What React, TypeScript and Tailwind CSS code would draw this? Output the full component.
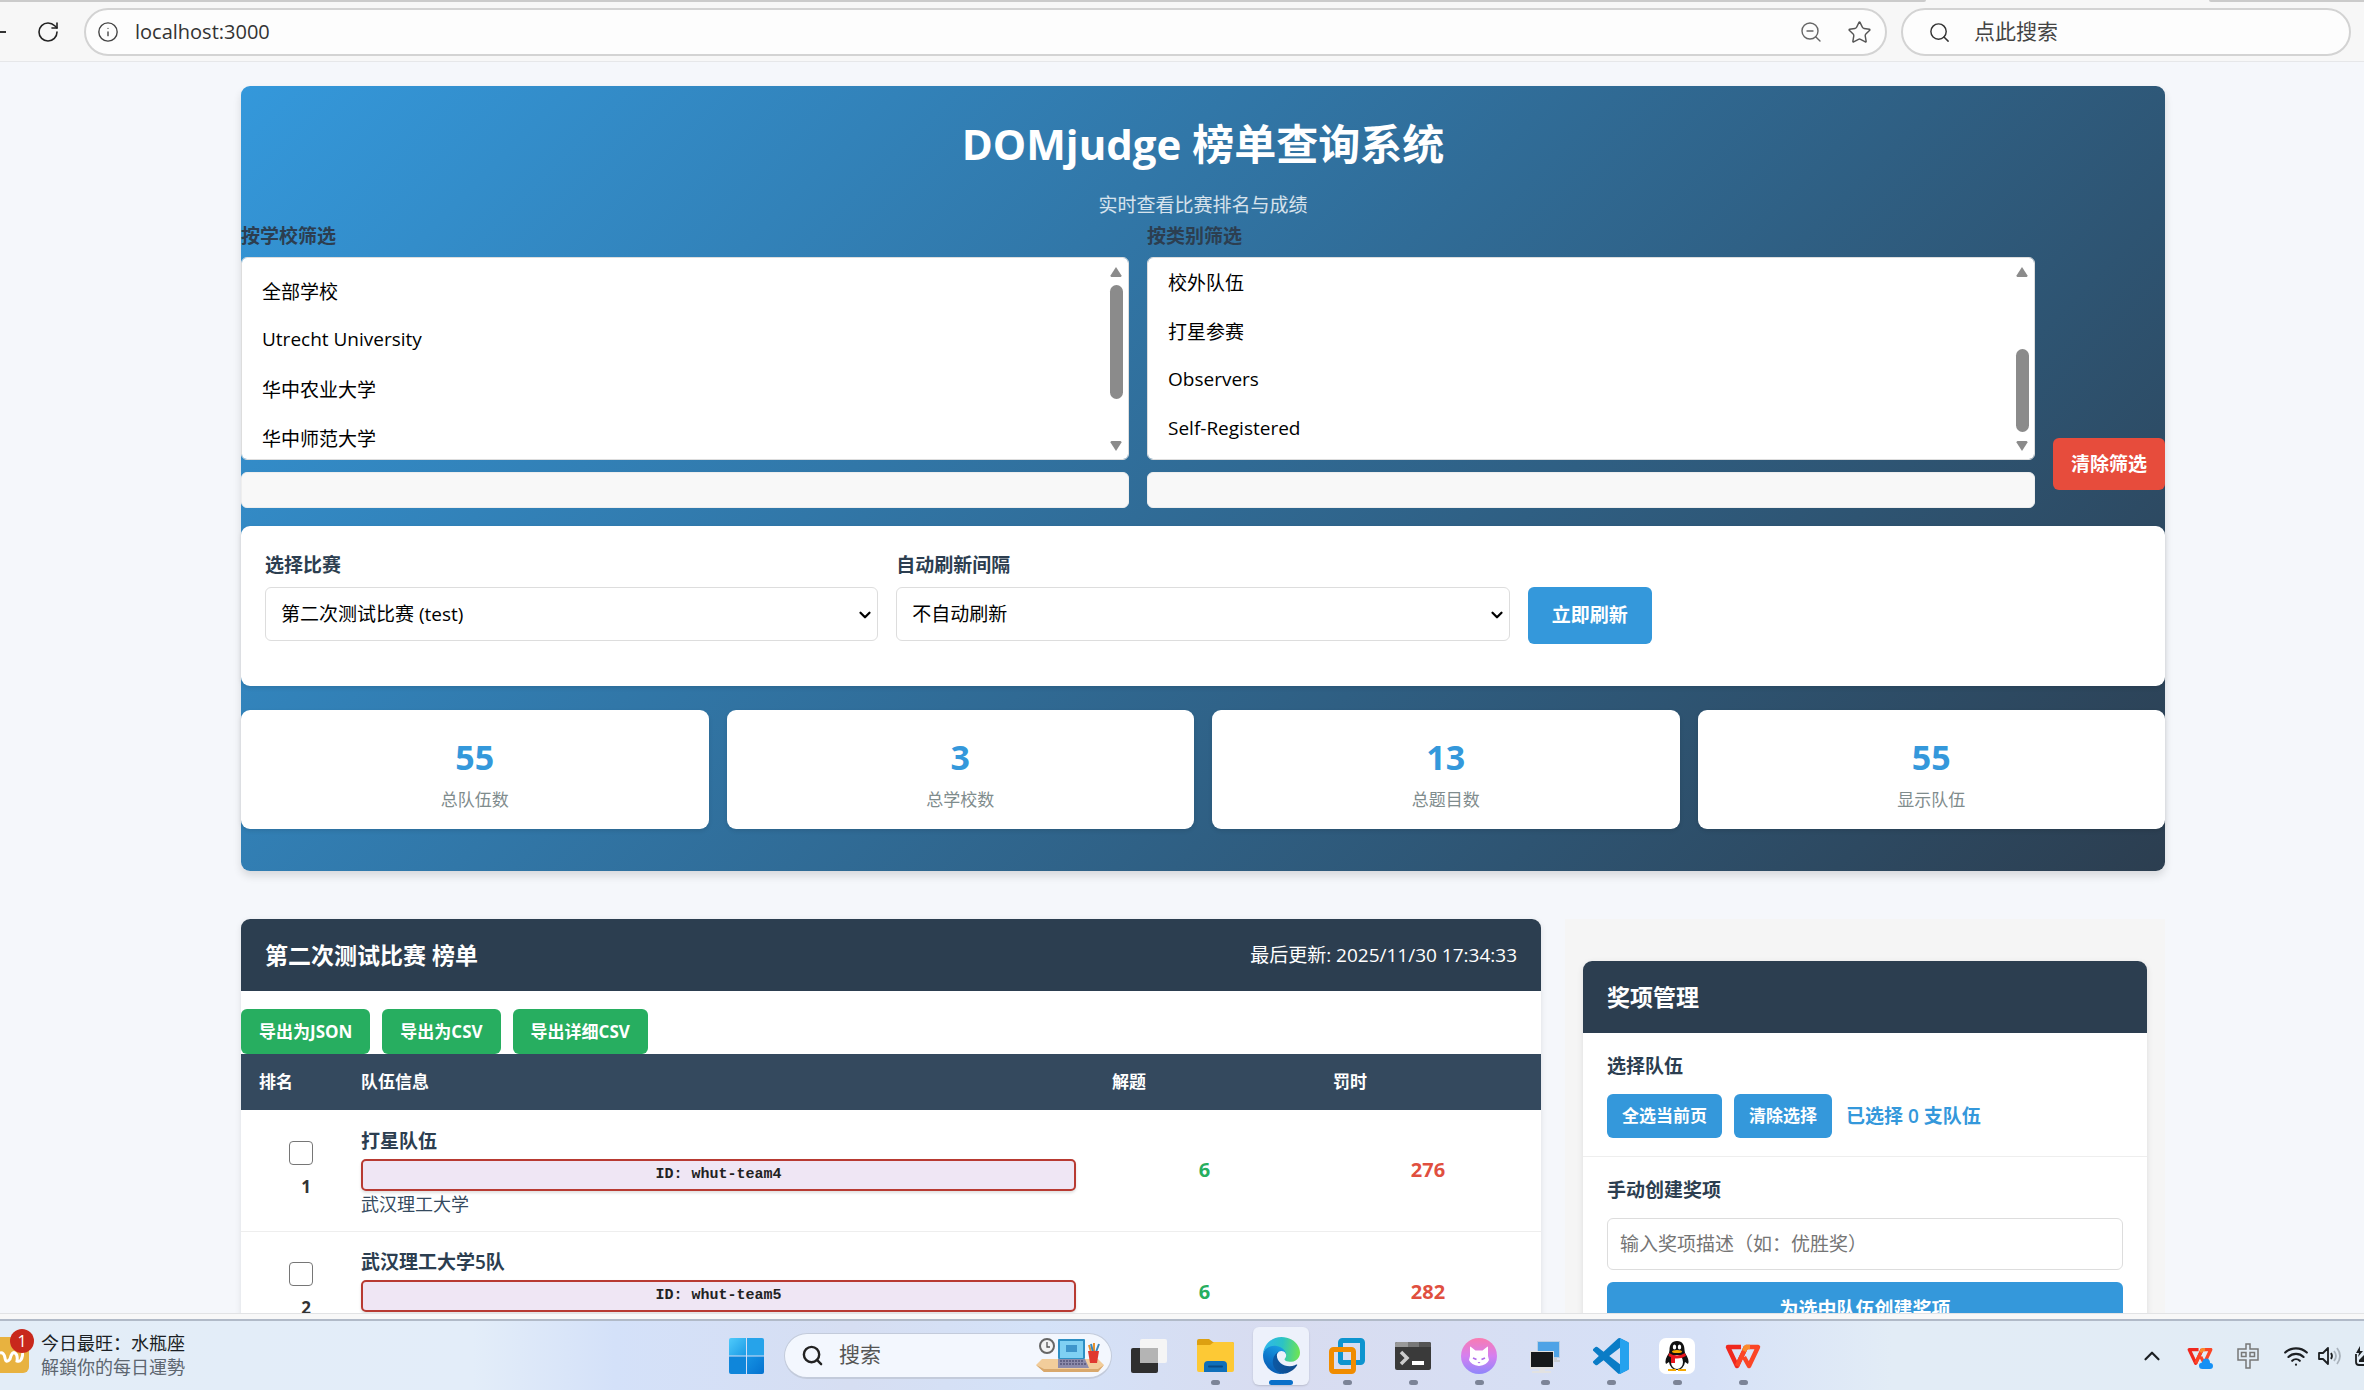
import { useEffect, useRef, useState } from "react";
import type { ReactNode } from "react";
import { ChevronDown, ChevronUp, Info, RotateCw, Search, Star, Wifi, ZoomOut } from "lucide-react";

const schools = ["全部学校", "Utrecht University", "华中农业大学", "华中师范大学", "武汉理工大学"];
const categories = ["全部类别", "Participants", "正式队伍", "校外队伍", "打星参赛", "Observers", "Self-Registered"];

const stats = [
  { label: "总队伍数", value: 55 },
  { label: "总学校数", value: 3 },
  { label: "总题目数", value: 13 },
  { label: "显示队伍", value: 55 },
];

const teams = [
  { rank: 1, name: "打星队伍", id: "whut-team4", school: "武汉理工大学", solved: 6, time: 276 },
  { rank: 2, name: "武汉理工大学5队", id: "whut-team5", school: "武汉理工大学", solved: 6, time: 282 },
];

const BrowserBar = () => {
  return (
    <header className="shrink-0 bg-[#f7f7f7] border-b border-[#e6e7e9]">
      <div className="flex h-[2px]">
        <div className="flex-[1926] bg-[#cbcbcb] rounded-br-sm"></div>
        <div className="flex-[283]"></div>
        <div className="flex-[155] bg-[#cbcbcb] rounded-bl-sm"></div>
      </div>
      <div className="flex items-center pt-[6px] pb-[5px] pr-[13px]">
        <button aria-label="后退" className="w-[6px] h-6 flex items-center">
          <span className="w-full h-[2px] bg-[#333]"></span>
        </button>
        <button aria-label="刷新页面" className="ml-[30px] mr-6 text-[#222]">
          <RotateCw size={24} strokeWidth={1.6} />
        </button>
        <div className="flex-1 h-12 flex items-center rounded-full border-2 border-[#d3d3d3] bg-[#fdfdfd] pl-[11px] pr-[13px]">
          <Info size={22} strokeWidth={1.5} className="text-[#444]" />
          <input
            aria-label="地址"
            defaultValue="localhost:3000"
            className="flex-1 ml-4 text-xl text-[#333] bg-transparent outline-none"
          />
          <button aria-label="缩放" className="text-[#666]">
            <ZoomOut size={24} strokeWidth={1.4} />
          </button>
          <button aria-label="收藏" className="ml-6 text-[#555]">
            <Star size={25} strokeWidth={1.4} />
          </button>
        </div>
        <label className="w-[450px] h-12 ml-[14px] flex items-center rounded-full border-2 border-[#d3d3d3] bg-[#fdfdfd] pl-[25px]">
          <Search size={23} strokeWidth={1.5} className="text-[#333]" />
          <input
            aria-label="搜索网页"
            placeholder="点此搜索"
            className="flex-1 ml-[23px] text-[21px] bg-transparent outline-none placeholder:text-[#444]"
          />
        </label>
      </div>
    </header>
  );
};

type FilterListProps = {
  id: string;
  label: string;
  options: string[];
  scrollTop: number;
  thumb: string;
};

const FilterList = ({ id, label, options, scrollTop, thumb }: FilterListProps) => {
  const ref = useRef<HTMLSelectElement>(null);

  useEffect(() => {
    if (ref.current) ref.current.scrollTop = scrollTop;
  }, [scrollTop]);

  return (
    <div className="flex-1 min-w-0">
      <label htmlFor={id} className="block mb-[6px] text-[19px] leading-[30px] font-semibold text-[#2c3e50]">
        {label}
      </label>
      <div className="relative">
        <select
          id={id}
          ref={ref}
          multiple
          className="block w-full h-[203px] py-[9px] px-[18px] rounded-md border border-[#ddd] bg-white text-[19px] text-black overflow-y-auto [scrollbar-width:none]"
        >
          {options.map((option) => (
            <option key={option} className="h-[49px] px-[2px] pt-[10px] pb-0">
              {option}
            </option>
          ))}
        </select>
        <div className="absolute right-[6px] top-[10px] bottom-[9px] w-[14px] flex flex-col items-center text-[#8b8b8b]">
          <svg width="12" height="10" viewBox="0 0 12 10" fill="currentColor">
            <path d="M6 0 11.5 8.5Q11.5 10 10.5 10H1.5Q.5 10 .5 8.5Z" />
          </svg>
          <div className={`w-[13px] rounded-full bg-[#8b8b8b] ${thumb}`}></div>
          <svg width="12" height="10" viewBox="0 0 12 10" fill="currentColor" className="mt-auto">
            <path d="M6 10 11.5 1.5Q11.5 0 10.5 0H1.5Q.5 0 .5 1.5Z" />
          </svg>
        </div>
      </div>
      <div className="mt-3 h-9 rounded-md bg-[#f8f8f8] border border-[#eee]"></div>
    </div>
  );
};

const SelectField = ({ id, label, value }: { id: string; label: string; value: string }) => {
  return (
    <div>
      <label htmlFor={id} className="block mb-[6px] text-[19px] leading-[31px] font-semibold text-[#2c3e50]">
        {label}
      </label>
      <div className="relative">
        <select
          id={id}
          className="appearance-none block w-full h-[54px] pl-[15px] pr-10 rounded-md border border-[#ddd] bg-white text-[19px] text-black"
        >
          <option>{value}</option>
        </select>
        <ChevronDown size={18} strokeWidth={3} className="absolute right-1 top-[19px] text-black pointer-events-none" />
      </div>
    </div>
  );
};

const Header = () => {
  return (
    <section className="rounded-[9px] bg-[linear-gradient(135deg,#3498db,#2c3e50)] pt-6 pb-[42px] shadow-[0_5px_8px_rgba(0,0,0,0.12)]">
      <h1 className="mb-3 text-center text-[42px] leading-[68px] font-bold text-white">DOMjudge 榜单查询系统</h1>
      <p className="text-center text-[19px] leading-[31px] text-white/80">实时查看比赛排名与成绩</p>
      <div className="flex items-end gap-[18px]">
        <FilterList id="school" label="按学校筛选" options={schools} scrollTop={0} thumb="mt-[8px] h-[114px]" />
        <FilterList id="category" label="按类别筛选" options={categories} scrollTop={156} thumb="mt-[72px] h-[83px]" />
        <button className="h-[52px] px-[18px] mb-[18px] rounded-md bg-[#e74c3c] text-[19px] font-bold text-white">
          清除筛选
        </button>
      </div>

      <div className="mt-[18px] grid grid-cols-3 gap-[18px] items-start rounded-[9px] bg-white px-6 pt-6 pb-[42px] shadow-[0_2px_4px_rgba(0,0,0,0.1)]">
        <SelectField id="contest" label="选择比赛" value="第二次测试比赛 (test)" />
        <SelectField id="interval" label="自动刷新间隔" value="不自动刷新" />
        <button className="mt-[37px] h-[57px] px-6 justify-self-start rounded-md bg-[#3498db] text-[19px] font-bold text-white">
          立即刷新
        </button>
      </div>

      <div className="mt-6 grid grid-cols-4 gap-[18px]">
        {stats.map((stat) => (
          <div
            key={stat.label}
            className="rounded-[9px] bg-white pt-[18px] pb-4 text-center shadow-[0_2px_4px_rgba(0,0,0,0.1)]"
          >
            <div className="text-[34px] leading-[58px] font-bold text-[#3498db]">{stat.value}</div>
            <div className="text-[17px] leading-[27px] text-[#7f8c8d]">{stat.label}</div>
          </div>
        ))}
      </div>
    </section>
  );
};

const Scoreboard = () => {
  return (
    <section className="rounded-t-[9px] overflow-hidden bg-white shadow-[0_2px_6px_rgba(0,0,0,0.1)]">
      <div className="h-[72px] px-6 flex items-center justify-between bg-[#2c3e50] text-white">
        <h2 className="text-[23px] font-bold">第二次测试比赛 榜单</h2>
        <span className="text-[19px]">最后更新: 2025/11/30 17:34:33</span>
      </div>
      <div className="mt-[18px] flex gap-3">
        {["导出为JSON", "导出为CSV", "导出详细CSV"].map((text) => (
          <button key={text} className="h-[45px] px-[18px] rounded-md bg-[#27ae60] text-[17px] font-bold text-white">
            {text}
          </button>
        ))}
      </div>
      <table className="w-full table-fixed border-collapse">
        <colgroup>
          <col className="w-[102px]" />
          <col />
          <col className="w-[17%]" />
          <col className="w-[226px]" />
        </colgroup>
        <thead>
          <tr className="h-14 bg-[#34495e] text-left text-[17px] text-white">
            <th className="px-[18px] font-bold">排名</th>
            <th className="px-[18px] font-bold">队伍信息</th>
            <th className="px-[18px] font-bold">解题</th>
            <th className="px-[18px] font-bold">罚时</th>
          </tr>
        </thead>
        <tbody>
          {teams.map((team) => (
            <tr key={team.id} className="h-[121px] border-b border-[#eee]">
              <td className="pl-[18px]">
                <div className="flex flex-col items-center gap-2 text-[#333]">
                  <input
                    type="checkbox"
                    aria-label={`选择 ${team.name}`}
                    className="appearance-none w-6 h-6 rounded-[4px] border border-[#767676] bg-white"
                  />
                  <span className="pl-[10px] text-[17px] leading-[27px] font-bold">{team.rank}</span>
                </div>
              </td>
              <td className="px-[18px]">
                <div className="text-[19px] leading-[31px] font-semibold text-[#2c3e50]">{team.name}</div>
                <div className="my-[2px] h-8 flex items-center justify-center rounded-[5px] border-2 border-[#b83a32] bg-[#efe6f4] font-['Liberation_Mono',monospace] text-[15px] font-bold text-[#222] shadow-[0_2px_3px_rgba(0,0,0,0.12)]">
                  ID: {team.id}
                </div>
                <div className="text-[18px] leading-[22px] text-[#34495e]">{team.school}</div>
              </td>
              <td className="text-center text-xl font-bold text-[#27ae60]">{team.solved}</td>
              <td className="text-center text-xl font-bold text-[#e04f3f]">{team.time}</td>
            </tr>
          ))}
        </tbody>
      </table>
    </section>
  );
};

const AwardPanel = () => {
  const [award, setAward] = useState("");

  return (
    <aside className="bg-[#f5f5f5] px-[18px] pt-[42px]">
      <div className="rounded-t-[9px] overflow-hidden bg-white shadow-[0_2px_6px_rgba(0,0,0,0.1)]">
        <h2 className="h-[72px] px-6 flex items-center bg-[#2c3e50] text-[23px] font-bold text-white">奖项管理</h2>
        <div className="p-[18px] px-6 border-b border-[#eee]">
          <h3 className="mb-3 text-[19px] leading-[31px] font-semibold text-[#2c3e50]">选择队伍</h3>
          <div className="flex items-center gap-3">
            <button className="h-11 px-[15px] rounded-md bg-[#3498db] text-[17px] font-bold text-white">全选当前页</button>
            <button className="h-11 px-[15px] rounded-md bg-[#3498db] text-[17px] font-bold text-white">清除选择</button>
            <span className="ml-[2px] text-[19px] font-semibold text-[#3498db]">已选择 0 支队伍</span>
          </div>
        </div>
        <div className="px-6 pt-[18px] pb-6">
          <label htmlFor="award" className="block mb-3 text-[19px] leading-[31px] font-semibold text-[#2c3e50]">
            手动创建奖项
          </label>
          <input
            id="award"
            value={award}
            onChange={(e) => setAward(e.target.value)}
            placeholder="输入奖项描述（如：优胜奖）"
            className="block w-full h-[52px] px-3 rounded-md border border-[#ddd] text-[19px] placeholder:text-[#757575]"
          />
          <button className="mt-3 w-full h-[54px] rounded-md bg-[#3498db] text-[19px] font-bold text-white">
            为选中队伍创建奖项
          </button>
        </div>
      </div>
    </aside>
  );
};

const WindowsLogo = () => (
  <svg width="35" height="36" viewBox="0 0 35 36">
    <defs>
      <linearGradient id="win" x1="0" y1="0" x2="1" y2="1">
        <stop offset="0" stopColor="#4fcbfb" />
        <stop offset="1" stopColor="#1c9be6" />
      </linearGradient>
      <linearGradient id="win2" x1="0" y1="0" x2="1" y2="1">
        <stop offset="0" stopColor="#1592e3" />
        <stop offset="1" stopColor="#0572cf" />
      </linearGradient>
    </defs>
    <path d="M2 0H17V17.5H0V2Q0 0 2 0Z" fill="url(#win)" />
    <path d="M18 0H33Q35 0 35 2V17.5H18Z" fill="#26a3ea" />
    <path d="M0 18.5H17V36H2Q0 36 0 34Z" fill="#0f86da" />
    <path d="M18 18.5H35V34Q35 36 33 36H18Z" fill="url(#win2)" />
  </svg>
);

const DeskArt = () => (
  <svg width="68" height="35" viewBox="0 0 68 35">
    <path d="M6 21H62L68 27 62 34H8L0 27Z" fill="#f2cd9b" />
    <path d="M0 27 8 34H62L68 27 62 31H8Z" fill="#d9a86c" />
    <circle cx="11" cy="8" r="7" fill="#f3f3f3" stroke="#666" strokeWidth="2" />
    <path d="M11 4V9H14" fill="none" stroke="#555" strokeWidth="1.3" />
    <rect x="22" y="1" width="27" height="20" rx="1" fill="#2d8fc4" />
    <rect x="24" y="3" width="23" height="17" fill="#7fd0f3" />
    <rect x="30" y="7" width="11" height="7" fill="#3e95cb" />
    <path d="M22 21H49L53 30H22Z" fill="#8d8bab" />
    <path d="M24 23H48M24 26H50" stroke="#56557a" strokeWidth="1.5" strokeDasharray="2 1" />
    <path d="M55 14 53 7M58 14V5" stroke="#e8912b" strokeWidth="2" />
    <path d="M57 14 55 6M60 14 63 6" stroke="#3b86b8" strokeWidth="2" />
    <path d="M52 13H63L61 25H54Z" fill="#e0392f" />
  </svg>
);

const TaskView = () => (
  <svg width="36" height="36" viewBox="0 0 36 36">
    <rect x="0" y="10" width="27" height="25" rx="2" fill="#2f2f2f" />
    <rect x="9" y="1" width="27" height="24" rx="2" fill="#f5f5f5" />
    <rect x="9" y="10" width="18" height="15" fill="#b4b4b4" />
  </svg>
);

const Explorer = () => (
  <svg width="37" height="36" viewBox="0 0 37 36">
    <path d="M0 3Q0 1 2 1H12L16 4H35Q37 4 37 6V10H0Z" fill="#dda011" />
    <path d="M0 7H13L17 4H35Q37 4 37 6V32Q37 34 35 34H2Q0 34 0 32Z" fill="#fdc935" />
    <path d="M7 34V27Q7 23 11 23H26Q30 23 30 27V34Z" fill="#0f6fba" />
    <path d="M12 28.5H25" stroke="#094b85" strokeWidth="2" strokeLinecap="round" />
  </svg>
);

const Edge = () => (
  <svg width="37" height="37" viewBox="0 0 256 256">
    <defs>
      <linearGradient id="edgeA" x1="60" y1="170" x2="240" y2="170" gradientUnits="userSpaceOnUse">
        <stop offset="0" stopColor="#0c59a4" />
        <stop offset="1" stopColor="#114a8b" />
      </linearGradient>
      <linearGradient id="edgeB" x1="130" y1="70" x2="50" y2="230" gradientUnits="userSpaceOnUse">
        <stop offset="0" stopColor="#1b9de2" />
        <stop offset="0.6" stopColor="#0c76cb" />
        <stop offset="1" stopColor="#0a5fb4" />
      </linearGradient>
      <linearGradient id="edgeC" x1="10" y1="80" x2="250" y2="110" gradientUnits="userSpaceOnUse">
        <stop offset="0" stopColor="#2fb7ea" />
        <stop offset="0.5" stopColor="#2cc3c4" />
        <stop offset="1" stopColor="#6ce455" />
      </linearGradient>
    </defs>
    <path
      fill="url(#edgeA)"
      d="M231 190.5c-3.4 1.8-6.9 3.4-10.5 4.7a101.5 101.5 0 0 1-35.9 6.5c-47.3 0-88.5-32.5-88.5-74.3.1-11.4 6.4-21.9 16.4-27.3-42.8 1.8-53.8 46.4-53.8 72.5 0 74 68.1 81.4 82.8 81.4 7.9 0 19.8-2.3 27-4.6l1.3-.4a128 128 0 0 0 66.6-52.8c1.2-1.9.6-4.3-1.2-5.5-1.3-.8-2.9-.9-4.2-.2z"
    />
    <path
      fill="url(#edgeB)"
      d="M105.7 241.4a79.2 79.2 0 0 1-22.7-21.3 80.7 80.7 0 0 1 29.5-120c3.1-1.5 8.5-4.1 15.6-4 10.1.1 19.6 4.9 25.7 13 4 5.4 6.3 11.9 6.4 18.7 0-.2 24.5-79.6-80-79.6-43.9 0-80 41.7-80 78.2-.2 19.3 4 38.5 12.1 56a128 128 0 0 0 156.4 67.1 75.5 75.5 0 0 1-62.9-8.1z"
    />
    <path
      fill="url(#edgeC)"
      d="M152.3 148.9c-.9 1-3.4 2.5-3.4 5.6 0 2.6 1.7 5.2 4.8 7.3 14.3 10 41.4 8.6 41.5 8.6 10.7 0 21.1-2.9 30.3-8.3a61.4 61.4 0 0 0 30.4-52.9c.3-22.4-8-37.3-11.3-43.9C223.5 23.9 177.7 0 128 0 58 0 1 56.2 0 126.2c.5-36.5 36.8-66 80-66 3.5 0 23.5.3 42 10.1 16.3 8.6 24.9 18.9 30.8 29.2 6.2 10.7 7.3 24.1 7.3 29.5s-2.7 13.3-7.8 19.9z"
    />
  </svg>
);

const VMware = () => (
  <svg width="36" height="36" viewBox="0 0 36 36" fill="none" strokeWidth="5">
    <rect x="11.5" y="2.5" width="22" height="22" rx="2" stroke="#0d94cf" />
    <rect x="2.5" y="11.5" width="22" height="22" rx="2" stroke="#f08c00" />
    <path d="M11.5 14V22.5Q11.5 24.5 13.5 24.5H21" stroke="#0d94cf" />
  </svg>
);

const Terminal = () => (
  <svg width="36" height="36" viewBox="0 0 36 36">
    <rect x="0" y="4" width="36" height="28" rx="2" fill="#3a3a3a" />
    <path d="M2 4H13V9H0V6Q0 4 2 4Z" fill="#999" />
    <path d="M13 4H24V9H13Z" fill="#777" />
    <path d="M24 4H34Q36 4 36 6V9H24Z" fill="#555" />
    <path d="M6 14 12 20 6 26" fill="none" stroke="#ccc" strokeWidth="3.5" />
    <rect x="17" y="23" width="12" height="4" fill="#fff" />
  </svg>
);

const Cat = () => (
  <svg width="36" height="36" viewBox="0 0 36 36">
    <defs>
      <linearGradient id="cat" x1="0" y1="0" x2="0" y2="1">
        <stop offset="0" stopColor="#f97bb0" />
        <stop offset="0.5" stopColor="#d580f0" />
        <stop offset="1" stopColor="#8f86fb" />
      </linearGradient>
    </defs>
    <circle cx="18" cy="18" r="18" fill="url(#cat)" />
    <path d="M9 9Q9 8 10 9L14.5 12.5H21.5L26 9Q27 8 27 9.5V18L28 22Q26 27 18 28 10 27 8 22L9 18Z" fill="#fff" />
    <path d="M12 20 15.5 21.5M24 20 20.5 21.5" stroke="#b06bea" strokeWidth="1.8" />
    <path d="M16.5 24H19.5L18 25.5Z" fill="#b06bea" />
  </svg>
);

const RemotePc = () => (
  <svg width="36" height="36" viewBox="0 0 36 36">
    <rect x="10" y="3" width="23" height="17" fill="#b9cfe4" />
    <rect x="11" y="4" width="21" height="15" fill="#4ea3e6" />
    <path d="M26 20H30V22H33V24H26Z" fill="#c9ced3" />
    <rect x="3" y="13" width="24" height="18" fill="#e2e2e2" />
    <rect x="4" y="14" width="22" height="15" fill="#16191b" />
    <path d="M12 31H18V33H24V35H5V33H12Z" fill="#e2e2e2" />
  </svg>
);

const VsCode = () => (
  <svg width="36" height="36" viewBox="0 0 100 100">
    <path
      fill="#0a7cc6"
      fillRule="evenodd"
      d="M70.9 99.3a6 6 0 0 0 5-.2l20.6-9.9c2.1-1 3.5-3.2 3.5-5.6V16.4c0-2.4-1.4-4.6-3.5-5.6L75.9.9a6.2 6.2 0 0 0-7.1 1.2L29.4 38 12.2 25a4.2 4.2 0 0 0-5.3.2L1.4 30.2a4.2 4.2 0 0 0 0 6.2L16.2 50 1.4 63.6a4.2 4.2 0 0 0 0 6.2l5.5 5a4.2 4.2 0 0 0 5.3.2l17.2-13 39.4 36c.6.6 1.3 1 2.1 1.3zM75 27.3 45.1 50 75 72.7V27.3z"
    />
    <path d="M75 1 96.5 10.8Q100 12.5 100 16.4V83.6Q100 87.5 96.5 89.2L75.9 99.1Q72 100.5 70 99 75 98 75 93Z" fill="#25a2ee" />
  </svg>
);

const Penguin = () => (
  <svg width="36" height="36" viewBox="0 0 36 36">
    <rect width="36" height="36" rx="7" fill="#fff" />
    <path d="M18 3C12.5 3 10.5 7 10.5 12L10 15Q5 22 7 26L10 24Q11 31 18 32 25 31 26 24L29 26Q31 22 26 15L25.5 12C25.5 7 23.5 3 18 3Z" fill="#111" />
    <ellipse cx="18" cy="24" rx="6" ry="7" fill="#fff" />
    <ellipse cx="15.5" cy="9" rx="1.7" ry="2.5" fill="#fff" />
    <ellipse cx="20.5" cy="9" rx="1.7" ry="2.5" fill="#fff" />
    <ellipse cx="18" cy="13.5" rx="5" ry="1.6" fill="#f5a800" />
    <path d="M10 15Q18 20 26 15L27 18Q18 23 9.5 18ZM12 19H16V25H12Z" fill="#e8141c" />
    <path d="M9 31H17V33H9ZM19 31H27V33H19Z" fill="#f5a800" />
  </svg>
);

const WpsLogo = ({ size }: { size: number }) => (
  <svg width={size} height={size} viewBox="0 0 36 36" fill="none" strokeWidth="4.5" strokeLinejoin="round">
    <path d="M16 9H3L12 28 21 9" stroke="#f0281e" />
    <path d="M12 28 21 9M19 19 24 28 33 9H21" stroke="#fb4526" />
    <path d="M19 13 21 9H25" stroke="#fb8a2c" />
  </svg>
);

const apps: { name: string; icon: ReactNode; state: "none" | "open" | "active" }[] = [
  { name: "任务视图", icon: <TaskView />, state: "none" },
  { name: "文件资源管理器", icon: <Explorer />, state: "open" },
  { name: "Edge", icon: <Edge />, state: "active" },
  { name: "VMware", icon: <VMware />, state: "open" },
  { name: "终端", icon: <Terminal />, state: "open" },
  { name: "Clash", icon: <Cat />, state: "open" },
  { name: "远程桌面", icon: <RemotePc />, state: "open" },
  { name: "VS Code", icon: <VsCode />, state: "open" },
  { name: "QQ", icon: <Penguin />, state: "open" },
  { name: "WPS", icon: <WpsLogo size={36} />, state: "open" },
];

const Taskbar = () => {
  return (
    <footer className="shrink-0 border-t border-[#e2e3e5] bg-[#f8f8f8] pt-[5px]">
      <div className="h-[71px] flex items-center border-t-2 border-[#b1bac8] bg-[linear-gradient(90deg,#e3edf7_0%,#e3edf9_20%,#d4e1f9_26%,#d6def2_36%,#d4e2f8_44%,#d8dcf0_54%,#d6e1f7_72%,#e2ecf6_80%,#e2ecf5_100%)]">
        <button className="w-[713px] pb-[2px] flex items-center text-left text-[18px] leading-6">
          <span className="relative w-[29px] h-9 mr-3 rounded-r-md bg-[#e8b23f]">
            <svg width="24" height="16" viewBox="0 0 24 16" className="mt-3" fill="none" stroke="#fff" strokeWidth="3">
              <path d="M0 4Q4 3 5 9T10 10Q12 2 15 4T17 12Q22 14 23 3" />
            </svg>
            <span className="absolute left-[10px] -top-2 w-6 h-6 rounded-full bg-[#c8281c] text-center text-base leading-6 text-white">
              1
            </span>
          </span>
          <span>
            <span className="block text-[#1b1f24]">今日最旺：水瓶座</span>
            <span className="block text-[#5d6670]">解鎖你的每日運勢</span>
          </span>
        </button>
        <button aria-label="开始" className="w-[71px] pl-4">
          <WindowsLogo />
        </button>
        <label className="w-[328px] h-[46px] mr-1 pl-4 pr-[7px] flex items-center rounded-full border border-[#c3cbdb] border-b-2 bg-[#f3f7fe]">
          <Search size={23} strokeWidth={2.5} className="text-[#222]" />
          <input
            aria-label="搜索"
            placeholder="搜索"
            className="flex-1 min-w-0 ml-[15px] text-[21px] bg-transparent outline-none placeholder:text-[#555]"
          />
          <DeskArt />
        </label>
        {apps.map((app) => (
          <button key={app.name} aria-label={app.name} className="w-[66px] flex justify-center">
            <span
              className={
                app.state === "active"
                  ? "relative w-14 h-[58px] flex items-center justify-center rounded-md bg-[#edf1fb] shadow-[0_1px_2px_rgba(0,0,0,0.15)]"
                  : "relative w-14 h-[58px] flex items-center justify-center"
              }
            >
              {app.icon}
              {app.state === "active" && <span className="absolute bottom-0 w-6 h-[5px] rounded-full bg-[#0a70c9]"></span>}
              {app.state === "open" && <span className="absolute bottom-0 w-[9px] h-[5px] rounded-full bg-[#7c8497]"></span>}
            </span>
          </button>
        ))}
        <div className="ml-auto flex items-center text-[#1c1f22]">
          <button aria-label="显示隐藏的图标" className="mr-[22px]">
            <ChevronUp size={26} strokeWidth={2} />
          </button>
          <span className="relative mr-6">
            <WpsLogo size={26} />
            <svg width="14" height="11" viewBox="0 0 14 11" className="absolute right-0 bottom-0">
              <path d="M3.5 11Q0 11 0 7.5 0 5 3 4.5 4 0 8 .5 11 1 11 5 14 5 14 8 14 11 11 11Z" fill="#1590f5" />
            </svg>
          </span>
          <svg width="22" height="26" viewBox="0 0 22 26" className="mr-6" fill="none" stroke="#777" strokeWidth="1.5">
            <path d="M9 1H13V6H21V17H13V25H9V17H1V6H9ZM4.5 9.5H9V13.5H4.5ZM13 9.5H17.5V13.5H13Z" />
          </svg>
          <Wifi size={26} strokeWidth={2} className="mr-[9px]" />
          <svg width="25" height="20" viewBox="0 0 25 20" className="mr-3" fill="none" strokeWidth="1.8">
            <path d="M1 7H5L10 2V18L5 13H1Z" stroke="#1c1f22" strokeLinejoin="round" />
            <path d="M13 7Q15 10 13 13" stroke="#1c1f22" />
            <path d="M16 5Q20 10 16 15M19 2Q25 10 19 18" stroke="#a9b2bb" />
          </svg>
          <svg width="9" height="20" viewBox="0 0 9 20">
            <path d="M5 0 1 7H4L3 11 8 5H5Z" fill="#1c1f22" />
            <path d="M1 8V16Q1 19 4 19H9" fill="none" stroke="#1c1f22" strokeWidth="1.8" />
            <path d="M4 16V14L9 9V16Z" fill="#1c1f22" />
          </svg>
        </div>
      </div>
    </footer>
  );
};

const App = () => {
  return (
    <div className="h-screen flex flex-col overflow-hidden bg-[#f5f7fb] font-['Open_Sans','Noto_Sans_CJK_SC',sans-serif]">
      <BrowserBar />
      <main className="flex-1 min-h-0 overflow-hidden pt-6 pl-[241px] pr-[199px]">
        <Header />
        <div className="mt-12 grid grid-cols-[minmax(0,13fr)_minmax(0,6fr)] gap-6">
          <Scoreboard />
          <AwardPanel />
        </div>
      </main>
      <Taskbar />
    </div>
  );
};

export default App;
